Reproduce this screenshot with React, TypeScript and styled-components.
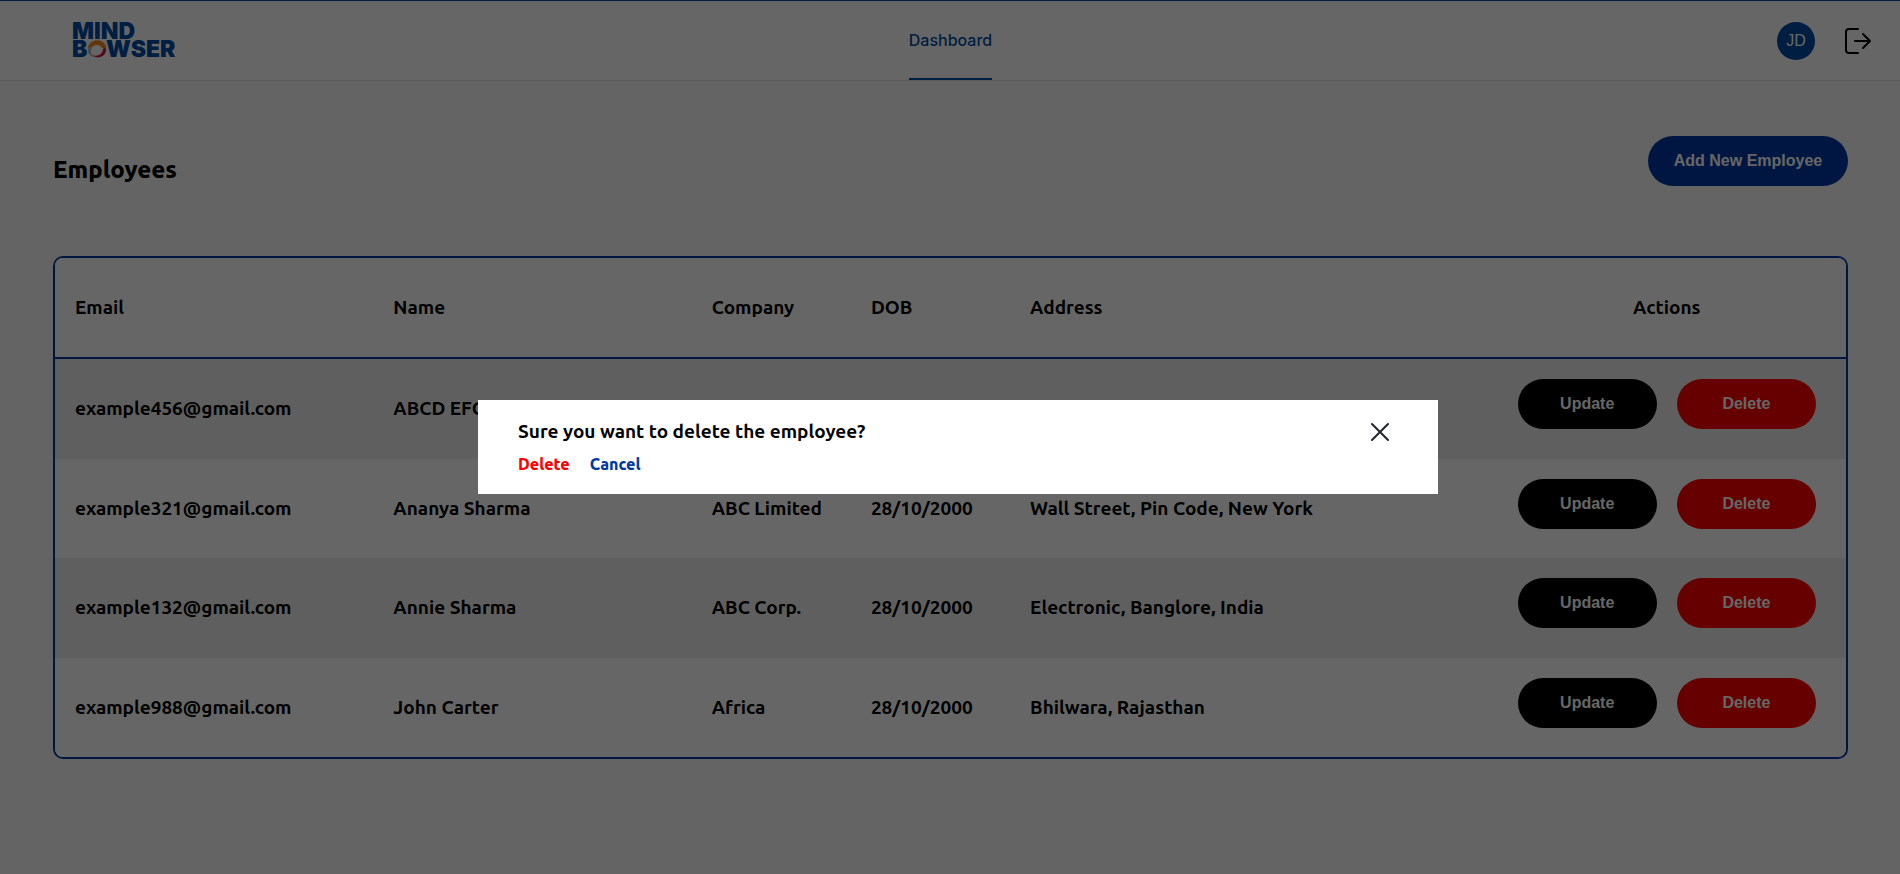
import React from "react";
import styled, { createGlobalStyle } from "styled-components";

const color = {
  brand: "#004ba3",
  primary: "#0039a6",
  danger: "#ff0000",
  page: "#fafafa",
  stripe: "#ededed",
};

const GlobalStyle = createGlobalStyle`
  *, *::before, *::after { box-sizing: border-box; }
  body {
    margin: 0;
    background: ${color.page};
    color: #000;
    font-family: "Ubuntu", "Noto Sans", sans-serif;
  }
  button { cursor: pointer; border: 0; }
`;

const Page = styled.div`
  min-height: 100vh;
`;

const Header = styled.header`
  display: grid;
  grid-template-columns: 1fr auto 1fr;
  height: 81px;
  padding: 0 28px 0 72px;
  background: #fff;
  border-top: 1px solid ${color.brand};
  border-bottom: 1px solid #e6e6e6;
`;

const Brand = styled.a`
  display: flex;
  align-items: center;
  width: max-content;
`;

const Nav = styled.nav`
  display: flex;
  padding-right: 43px;
`;

const NavLink = styled.a`
  display: flex;
  align-items: center;
  border-bottom: 2px solid ${color.brand};
  color: ${color.brand};
  font: 500 16px "Inter", sans-serif;
  text-decoration: none;
`;

const Account = styled.div`
  display: flex;
  align-items: center;
  justify-content: flex-end;
  gap: 29px;
`;

const Avatar = styled.span`
  display: grid;
  place-items: center;
  width: 38px;
  height: 38px;
  border-radius: 50%;
  background: ${color.brand};
  color: #fff;
  font: 400 16px "Liberation Sans", Arial, sans-serif;
`;

const IconButton = styled.button`
  display: grid;
  place-items: center;
  padding: 0;
  background: none;
`;

const Content = styled.main`
  padding: 55px 52px 0 53px;
`;

const TitleBar = styled.div`
  display: flex;
  align-items: flex-start;
  justify-content: space-between;
  margin-bottom: 70px;
`;

const Title = styled.h1`
  margin: 0;
  padding-top: 17px;
  font-size: 24px;
  line-height: 33px;
  font-weight: 800;
`;

const PillButton = styled.button<{ $bg: string; $wide?: boolean }>`
  width: ${(p) => (p.$wide ? "200px" : "100%")};
  height: 50px;
  padding: 0;
  border-radius: 25px;
  background: ${(p) => p.$bg};
  color: #fff;
  font: 700 16px "Liberation Sans", Arial, sans-serif;
`;

const TableFrame = styled.div`
  border: 2px solid ${color.primary};
  border-radius: 10px;
  background: #fff;
  overflow: hidden;
`;

const Table = styled.table`
  display: block;
  font-size: 19px;
  line-height: 24px;
  font-weight: 700;
`;

const Head = styled.thead`
  display: block;
  border-bottom: 2px solid ${color.primary};
`;

const Body = styled.tbody`
  display: grid;
  grid-auto-rows: 1fr;
  min-height: 398px;
`;

const Row = styled.tr<{ $striped?: boolean }>`
  display: grid;
  grid-template-columns: 2fr 2fr 1fr 1fr 3fr 2fr;
  align-items: center;
  min-height: 99px;
  padding: 0 20px;
  background: ${(p) => (p.$striped ? color.stripe : "#fff")};
`;

const HeadCell = styled.th<{ $center?: boolean }>`
  padding: 0 0 2px;
  text-align: ${(p) => (p.$center ? "center" : "left")};
`;

const Cell = styled.td`
  padding: 0 0 1px;
`;

const ActionCell = styled.td`
  display: grid;
  grid-template-columns: 1fr 1fr;
  gap: 20px;
  align-self: start;
  padding: 20px 10px 0;
`;

const Overlay = styled.div`
  position: fixed;
  inset: 0;
  display: flex;
  align-items: center;
  justify-content: center;
  padding: 20px 0 0 16px;
  background: rgba(0, 0, 0, 0.6);
`;

const Dialog = styled.div`
  display: flex;
  align-items: flex-start;
  justify-content: space-between;
  width: 960px;
  max-width: 90%;
  padding: 18px 48px 17px 40px;
  background: #fff;
`;

const DialogTitle = styled.h2`
  margin: 0 0 8px;
  font-size: 19px;
  line-height: 26px;
  font-weight: 700;
`;

const DialogActions = styled.div`
  display: flex;
  gap: 20px;
`;

const TextButton = styled.button<{ $color: string }>`
  padding: 0;
  background: none;
  color: ${(p) => p.$color};
  font-family: inherit;
  font-size: 16px;
  line-height: 25px;
  font-weight: 800;
`;

const CloseButton = styled(IconButton)`
  margin-top: 4px;
`;

const LogoText = styled.text`
  font: 900 23px "Inter", sans-serif;
  fill: ${color.brand};
`;

const Logo = () => (
  <svg width="108" height="52" viewBox="0 0 108 52" role="img" aria-label="Mindbowser">
    <LogoText x="0" y="24">MIND</LogoText>
    <LogoText x="0" y="42">B</LogoText>
    <LogoText x="34" y="42">WSER</LogoText>
    <path d="M16 33 C17 24 30 22 34 31 L34 34 C30 35 29 29 24 30 C20 31 19 34 16 33Z" fill="#f58b1f" />
    <path d="M34 33 C35 42 25 45 20 40 C26 42 31 39 31 34Z" fill="#d8123b" />
    <path d="M17 32 C14 36 17 42 23 42 C19 40 18 36 20 32Z" fill="#b4b7ba" />
  </svg>
);

const LogoutIcon = () => (
  <svg width="28" height="28" viewBox="0 0 28 28" fill="none" stroke="#000" strokeWidth="2" strokeLinecap="round" strokeLinejoin="round">
    <path d="M14 2H5Q2 2 2 5V23Q2 26 5 26H14" />
    <path d="M11 14H26M19 7L26 14L19 21" />
  </svg>
);

const CloseIcon = () => (
  <svg width="20" height="20" viewBox="0 0 20 20" fill="none" stroke="#212529" strokeWidth="2" strokeLinecap="round">
    <path d="M2 2L18 18M18 2L2 18" />
  </svg>
);

const employees = [
  { email: "example456@gmail.com", name: "ABCD EFGH", company: "", dob: "", address: "" },
  { email: "example321@gmail.com", name: "Ananya Sharma", company: "ABC Limited", dob: "28/10/2000", address: "Wall Street, Pin Code, New York" },
  { email: "example132@gmail.com", name: "Annie Sharma", company: "ABC Corp.", dob: "28/10/2000", address: "Electronic, Banglore, India" },
  { email: "example988@gmail.com", name: "John Carter", company: "Africa", dob: "28/10/2000", address: "Bhilwara, Rajasthan" },
];

export default function App() {
  return (
    <>
      <GlobalStyle />
      <Page>
        <Header>
          <Brand href="#home"><Logo /></Brand>
          <Nav><NavLink href="#dashboard" aria-current="page">Dashboard</NavLink></Nav>
          <Account>
            <Avatar>JD</Avatar>
            <IconButton type="button" aria-label="Log out"><LogoutIcon /></IconButton>
          </Account>
        </Header>
        <Content>
          <TitleBar>
            <Title>Employees</Title>
            <PillButton type="button" $bg={color.primary} $wide>Add New Employee</PillButton>
          </TitleBar>
          <TableFrame>
            <Table>
              <Head>
                <Row>
                  <HeadCell scope="col">Email</HeadCell>
                  <HeadCell scope="col">Name</HeadCell>
                  <HeadCell scope="col">Company</HeadCell>
                  <HeadCell scope="col">DOB</HeadCell>
                  <HeadCell scope="col">Address</HeadCell>
                  <HeadCell scope="col" $center>Actions</HeadCell>
                </Row>
              </Head>
              <Body>
                {employees.map((e, i) => (
                  <Row key={e.email} $striped={i % 2 === 0}>
                    <Cell>{e.email}</Cell>
                    <Cell>{e.name}</Cell>
                    <Cell>{e.company}</Cell>
                    <Cell>{e.dob}</Cell>
                    <Cell>{e.address}</Cell>
                    <ActionCell>
                      <PillButton type="button" $bg="#000">Update</PillButton>
                      <PillButton type="button" $bg={color.danger}>Delete</PillButton>
                    </ActionCell>
                  </Row>
                ))}
              </Body>
            </Table>
          </TableFrame>
        </Content>
      </Page>
      <Overlay>
        <Dialog role="dialog" aria-modal="true" aria-labelledby="confirm-title">
          <div>
            <DialogTitle id="confirm-title">Sure you want to delete the employee?</DialogTitle>
            <DialogActions>
              <TextButton type="button" $color={color.danger}>Delete</TextButton>
              <TextButton type="button" $color={color.primary}>Cancel</TextButton>
            </DialogActions>
          </div>
          <CloseButton type="button" aria-label="Close"><CloseIcon /></CloseButton>
        </Dialog>
      </Overlay>
    </>
  );
}
